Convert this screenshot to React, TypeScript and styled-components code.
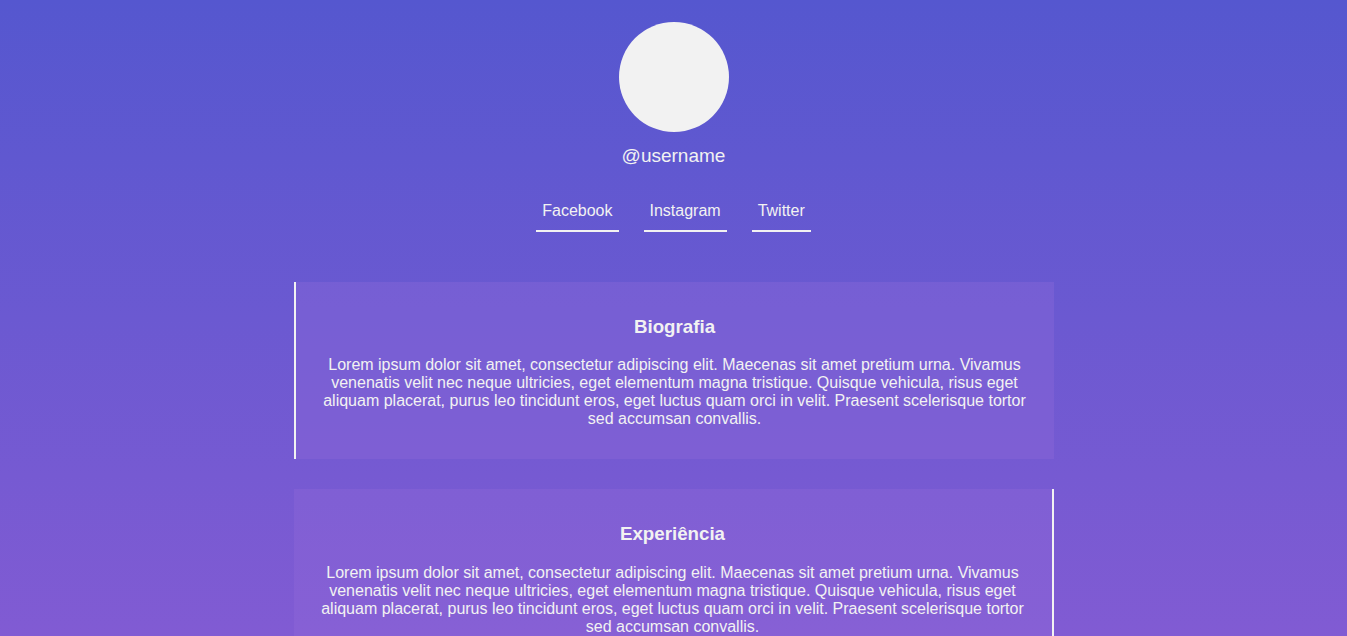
import React from "react";
import styled, {createGlobalStyle} from "styled-components";

const GlobalStyle = createGlobalStyle`
  html {
    min-height: 100%;
    background: linear-gradient(180deg, #5557cf 0%, #815bd3 100%) fixed;
  }

  body {
    margin: 0;
    font-family: "Liberation Sans", Arial, sans-serif;
    color: #f2f2f2;
  }
`;

const Page = styled.div`
  display: flex;
  flex-direction: column;
  align-items: center;
  padding: 22px 0 40px;
`;

const Header = styled.header`
  display: flex;
  flex-direction: column;
  align-items: center;
`;

const Avatar = styled.div`
  width: 110px;
  height: 110px;
  border-radius: 50%;
  background: #f2f2f2;
`;

const Username = styled.span`
  margin-top: 13px;
  font-size: 19px;
  line-height: 22px;
`;

const Links = styled.nav`
  display: flex;
  gap: 25px;
  margin-top: 25px;
`;

const SocialLink = styled.a`
  padding: 10px 6px 10px;
  font-size: 16px;
  line-height: 18px;
  color: #f2f2f2;
  text-decoration: none;
  border-bottom: 2px solid #f2f2f2;
`;

const Sections = styled.main`
  display: flex;
  flex-direction: column;
  gap: 30px;
  width: 760px;
  margin-top: 50px;
`;

const Card = styled.section<{$side: "left" | "right"}>`
  padding: 15px 15px;
  background: rgba(150, 110, 220, 0.3);
  text-align: center;
  ${({$side}) =>
    $side === "left"
      ? "border-left: 2px solid #f2f2f2;"
      : "border-right: 2px solid #f2f2f2;"}
`;

const CardTitle = styled.h3`
  margin: 18.72px 0;
  font-size: 18.72px;
  font-weight: bold;
`;

const CardText = styled.p`
  margin: 16px 0;
  font-size: 16px;
  line-height: 18px;
`;

const lorem =
  "Lorem ipsum dolor sit amet, consectetur adipiscing elit. Maecenas sit amet pretium urna. Vivamus venenatis velit nec neque ultricies, eget elementum magna tristique. Quisque vehicula, risus eget aliquam placerat, purus leo tincidunt eros, eget luctus quam orci in velit. Praesent scelerisque tortor sed accumsan convallis.";

const sections: {title: string; side: "left" | "right"}[] = [
  {title: "Biografia", side: "left"},
  {title: "Experiência", side: "right"},
];

const App: React.FC = () => {
  return (
    <>
      <GlobalStyle />
      <Page>
        <Header>
          <Avatar />
          <Username>@username</Username>
          <Links>
            <SocialLink href="#">Facebook</SocialLink>
            <SocialLink href="#">Instagram</SocialLink>
            <SocialLink href="#">Twitter</SocialLink>
          </Links>
        </Header>
        <Sections>
          {sections.map((s) => (
            <Card key={s.title} $side={s.side}>
              <CardTitle>{s.title}</CardTitle>
              <CardText>{lorem}</CardText>
            </Card>
          ))}
        </Sections>
      </Page>
    </>
  );
};

export default App;
